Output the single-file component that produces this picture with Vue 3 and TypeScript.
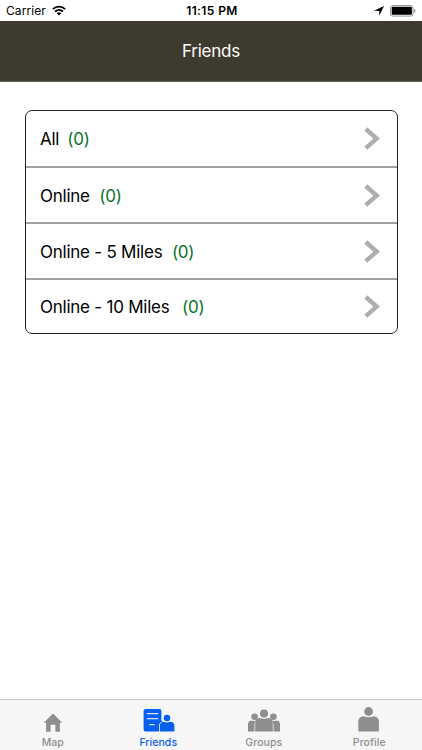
<script setup lang="ts">
interface FriendGroup {
  label: string
  count: number
  key: string
}

const groups: FriendGroup[] = [
  { label: 'All', count: 0, key: 'all' },
  { label: 'Online', count: 0, key: 'online' },
  { label: 'Online - 5 Miles', count: 0, key: 'five' },
  { label: 'Online - 10 Miles', count: 0, key: 'ten' },
]

const tabs = ['Map', 'Friends', 'Groups', 'Profile']
const activeTab = 'Friends'
</script>

<template>
  <div class="screen">
    <div class="status">
      <div class="carrier">
        <span>Carrier</span>
        <svg class="wifi" width="14" height="11" viewBox="0 0 14 11">
          <path d="M0.9 4.1a8.8 8.8 0 0 1 12.2 0M3.1 6.5a5.7 5.7 0 0 1 7.8 0" fill="none" stroke="#000" stroke-width="1.9" />
          <path d="M4.7 8.2a3.4 3.4 0 0 1 4.6 0L7 10.6z" />
        </svg>
      </div>
      <span class="time">11:15 PM</span>
      <div class="indicators">
        <svg width="10" height="10" viewBox="0 0 10 10"><path d="M10 0 5.3 9.8V4.9L0 4.7z" /></svg>
        <svg width="26" height="12" viewBox="0 0 26 12">
          <rect x="0.5" y="0.5" width="22.6" height="10.6" rx="2.4" fill="#fff" stroke="#888" stroke-width="0.9" />
          <rect x="1.7" y="1.8" width="20.2" height="8" rx="1" />
          <path d="M24.2 4v3.8q1.3-.6 1.3-1.9T24.2 4z" fill="#888" />
        </svg>
      </div>
    </div>

    <header class="navbar"><h1>Friends</h1></header>

    <main>
      <ul class="card">
        <li v-for="g in groups" :key="g.key" class="row" :class="g.key">
          <span class="label">{{ g.label }}</span>
          <span class="count">({{ g.count }})</span>
          <svg class="chevron" width="18" height="26" viewBox="0 0 18 26">
            <path d="M2.7 3 13.7 12.6 2.7 22.2" fill="none" stroke="#aeaeae" stroke-width="4.4" />
          </svg>
        </li>
      </ul>
    </main>

    <nav class="tabs">
      <div v-for="t in tabs" :key="t" class="tab" :class="[t.toLowerCase(), { active: t === activeTab }]">
        <svg v-if="t === 'Map'" width="20" height="20" viewBox="0 0 20 20">
          <path d="M10 .6 19.2 9.8H16.9V18.8H12.4V11.8H7.6V18.8H3.1V9.8H.8z" />
        </svg>
        <svg v-else-if="t === 'Friends'" width="32" height="24" viewBox="0 0 32 24">
          <path d="M2.6 0H16.4a2 2 0 0 1 2 2V11a4.2 4.2 0 0 0 1 1.6 4.7 4.7 0 0 0-3.4 4.4V22.6H2.6a2 2 0 0 1-2-2V2a2 2 0 0 1 2-2z" />
          <path d="M3.8 4.6H15.2M3.8 9.6H15.2M6.3 15.6H11.6" stroke="#d5e2fa" stroke-width="1.2" />
          <circle cx="24" cy="9" r="3.3" />
          <path d="M16.8 22.6V17a4.3 4.3 0 0 1 4-4.2q3.2 1.6 6.4 0a4.3 4.3 0 0 1 4.2 4.2V22.6z" />
        </svg>
        <svg v-else-if="t === 'Groups'" width="34" height="24" viewBox="0 0 34 24">
          <circle cx="7.6" cy="7.8" r="3.3" /><circle cx="26.4" cy="7.8" r="3.3" /><circle cx="17" cy="4.4" r="4" />
          <path d="M1 22.6V15.5a4 4 0 0 1 4-4q2.6 1.2 5-.2Q7.5 12.3 7.5 15.7V22.6z" />
          <path d="M33 22.6V15.5a4 4 0 0 0-4-4q-2.6 1.2-5-.2 2.5 1 2.5 4.4V22.6z" />
          <path d="M8.2 22.6V13.7a4.8 4.8 0 0 1 4.5-4.7Q17 10.6 21.3 9a4.8 4.8 0 0 1 4.5 4.7V22.6z" />
        </svg>
        <svg v-else width="22" height="26" viewBox="0 0 22 26">
          <circle cx="10.6" cy="4.5" r="4.4" />
          <path d="M.3 24.6V14.5a5.2 5.2 0 0 1 5.2-5.3Q10.6 11.2 15.7 9.2a5.2 5.2 0 0 1 5.2 5.3V24.6z" />
        </svg>
        <span>{{ t }}</span>
      </div>
    </nav>
  </div>
</template>

<style>
body {
  background: #fff;
}
</style>

<style scoped>
.screen {
  width: 422px;
  height: 750px;
  display: flex;
  flex-direction: column;
  background: #fff;
  color: #000;
  font-family: Inter, "Liberation Sans", sans-serif;
  overflow: hidden;
}
.status {
  box-sizing: border-box;
  height: 21px;
  padding: 0 6px;
  display: grid;
  grid-template-columns: 1fr auto 1fr;
  align-items: center;
  font-size: 12px;
  line-height: 21px;
}
.carrier {
  display: flex;
  align-items: center;
  gap: 6px;
  letter-spacing: 0.08px;
}
.time {
  font-weight: 600;
  letter-spacing: 0.4px;
  padding-left: 2px;
}
.indicators {
  display: flex;
  align-items: center;
  justify-content: flex-end;
  gap: 6px;
}
.navbar {
  box-sizing: border-box;
  height: 61px;
  background: #3e3a2e;
  border-bottom: 1px solid #66635a;
  display: flex;
  align-items: center;
  justify-content: center;
}
h1 {
  margin: 0;
  color: #fff;
  font-size: 17px;
  font-weight: 400;
  letter-spacing: -0.25px;
}
main {
  flex: 1;
  padding: 28px 24px 0 25px;
}
.card {
  box-sizing: border-box;
  height: 224px;
  margin: 0;
  padding: 0;
  list-style: none;
  border: 1px solid #222;
  border-radius: 7px;
  display: grid;
  grid-template-rows: 57px 56px 56px 1fr;
}
.row {
  display: flex;
  align-items: center;
  padding: 0 16px 0 14px;
  font-size: 17px;
  letter-spacing: -0.24px;
  border-bottom: 2px solid #a0a0a0;
}
.row.online,
.row.five {
  padding-top: 1px;
}
.row.ten {
  border-bottom: 0;
}
.count {
  margin-left: 9.5px;
  color: #08752f;
}
.all .count {
  margin-left: 8px;
}
.ten .count {
  margin-left: 12.5px;
}
.chevron {
  margin-left: auto;
}
.tabs {
  box-sizing: border-box;
  height: 51px;
  border-top: 1px solid #c9c9c9;
  background: #f6f6f6;
  display: grid;
  grid-template-columns: repeat(4, 1fr);
}
.tab {
  display: flex;
  flex-direction: column;
  align-items: center;
  justify-content: flex-end;
  color: #8e8e8e;
  fill: currentColor;
  font-size: 10.5px;
  font-weight: 500;
  letter-spacing: 0.05px;
}
.tab span {
  line-height: 13px;
  margin: 3px 0 1px;
}
.tab.friends svg {
  margin-left: 1px;
}
.tab.active {
  color: #075ff2;
}
</style>
